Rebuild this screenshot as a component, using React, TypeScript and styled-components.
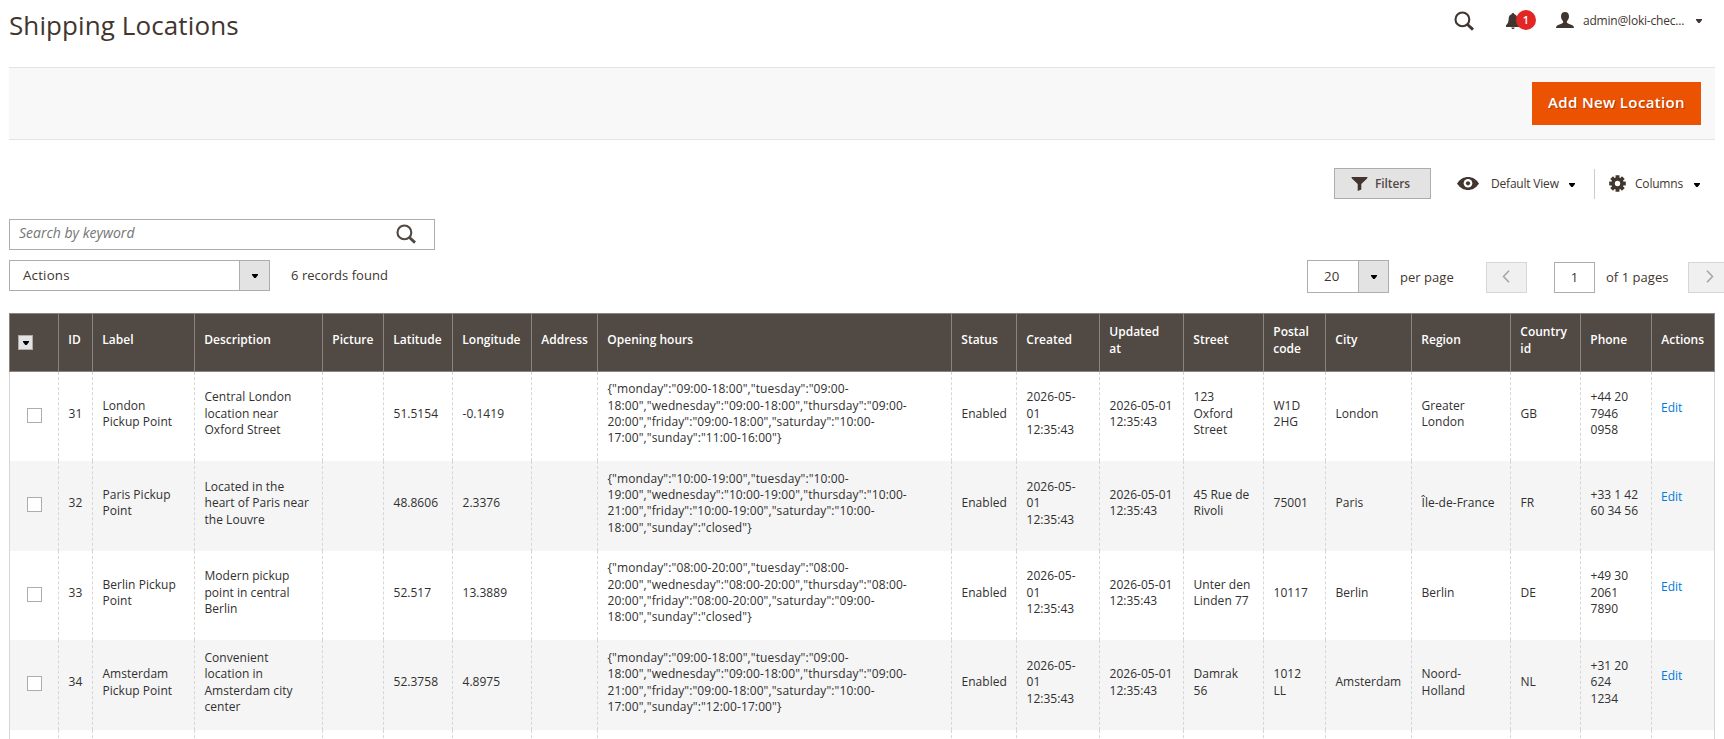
import React from 'react';
import styled, { createGlobalStyle } from 'styled-components';

const GlobalStyle = createGlobalStyle`
  *, *::before, *::after { box-sizing: border-box; }
  html, body { margin: 0; height: 100%; overflow: hidden; }
  body {
    background: #fff;
    color: #41362f;
    font-family: 'Open Sans', 'Liberation Sans', sans-serif;
    font-size: 13px;
    line-height: 1.36;
  }
`;

const Page = styled.div`
  width: 1706px;
  margin-left: 9px;
`;

const Header = styled.header`
  display: flex;
  justify-content: space-between;
  height: 67px;
`;

const Title = styled.h1`
  margin: 7px 0 0;
  font-size: 26px;
  font-weight: 400;
  letter-spacing: 0.1px;
  line-height: 37px;
  white-space: nowrap;
`;

const HeaderTools = styled.div`
  display: flex;
  align-items: flex-start;
  svg { display: block; }
`;

const HeaderSearch = styled.div`
  padding-top: 11px;
  margin-right: 31px;
`;

const Notifications = styled.div`
  position: relative;
  width: 50px;
  padding-top: 13px;
`;

const Badge = styled.span`
  position: absolute;
  left: 10px;
  top: 10px;
  width: 20px;
  height: 20px;
  border-radius: 50%;
  background: #e22626;
  color: #fff;
  font-size: 11px;
  font-weight: 600;
  line-height: 20px;
  text-align: center;
`;

const UserMenu = styled.div`
  display: flex;
  align-items: center;
  height: 40px;
  width: 159px;
  font-size: 12px;
  letter-spacing: -0.2px;
  svg:last-child { margin-top: 2px; }
`;

const UserName = styled.span`
  width: 113px;
  margin-left: 9px;
  padding-top: 2px;
`;

const ActionBar = styled.div`
  display: flex;
  justify-content: flex-end;
  height: 73px;
  padding: 14px 14px 0 0;
  background: #f8f8f8;
  border-top: 1px solid #e3e3e3;
  border-bottom: 1px solid #e3e3e3;
`;

const PrimaryButton = styled.button`
  width: 169px;
  height: 43px;
  padding: 0 0 2px;
  border: 0;
  background: #eb5202;
  color: #fff;
  font: 600 15px/41px 'Open Sans', sans-serif;
  letter-spacing: 0.35px;
  text-shadow: 1px 1px 0 rgba(0, 0, 0, 0.25);
`;

const ViewTools = styled.div`
  display: flex;
  align-items: center;
  justify-content: flex-end;
  height: 31px;
  margin-top: 28px;
  font-size: 12px;
  letter-spacing: -0.2px;
`;

const FilterButton = styled.button`
  display: flex;
  align-items: center;
  gap: 7px;
  width: 97px;
  height: 31px;
  padding: 0 0 0 16px;
  border: 1px solid #adadad;
  background: #e3e3e3;
  color: #514943;
  font: 600 12px/29px 'Open Sans', sans-serif;
  letter-spacing: -0.1px;
`;

const ViewToggle = styled.div<{ $width: number; $gap: number; $divided?: boolean }>`
  display: flex;
  align-items: center;
  width: ${(p) => p.$width}px;
  height: 30px;
  padding-left: ${(p) => (p.$divided ? 14 : 26)}px;
  border-left: ${(p) => (p.$divided ? '1px solid #ccc' : '0')};
  gap: ${(p) => p.$gap}px;
  white-space: nowrap;
  svg:last-child {
    margin-top: 3px;
    margin-left: ${(p) => (p.$divided ? 2 : -2)}px;
  }
`;

const ViewLabel = styled.span`
  padding-top: 2px;
`;

const SearchBox = styled.div`
  display: flex;
  justify-content: space-between;
  width: 426px;
  height: 31px;
  margin-top: 20px;
  padding: 0 17px 0 9px;
  border: 1px solid #adadad;
  svg { margin-top: 4px; }
`;

const Placeholder = styled.span`
  color: #757575;
  font-size: 14px;
  font-style: italic;
  line-height: 26px;
`;

const GridControls = styled.div`
  display: flex;
  justify-content: space-between;
  height: 33px;
  margin-top: 10px;
`;

const ControlGroup = styled.div`
  display: flex;
  align-items: flex-start;
`;

const Pager = styled(ControlGroup)`
  width: 408px;
  flex: none;
`;

const Select = styled.div<{ $width: number; $height: number; $indent: number }>`
  display: flex;
  justify-content: space-between;
  flex: none;
  width: ${(p) => p.$width}px;
  height: ${(p) => p.$height}px;
  padding-left: ${(p) => p.$indent}px;
  border: 1px solid #adadad;
  font-size: 13.3px;
  letter-spacing: 0.2px;
  line-height: ${(p) => p.$height - 2}px;
`;

const SelectArrow = styled.span`
  display: flex;
  align-items: center;
  justify-content: center;
  width: 30px;
  border-left: 1px solid #adadad;
  background: #e3e3e3;
`;

const Caption = styled.span<{ $width?: number; $indent: number; $top: number }>`
  flex: none;
  width: ${(p) => (p.$width ? `${p.$width}px` : 'auto')};
  padding-left: ${(p) => p.$indent}px;
  margin-top: ${(p) => p.$top}px;
  line-height: 18px;
  letter-spacing: 0.04px;
  white-space: nowrap;
`;

const PageButton = styled.button<{ $shift: number }>`
  display: flex;
  align-items: center;
  justify-content: center;
  flex: none;
  width: 41px;
  height: 31px;
  margin-top: 2px;
  padding: 0 ${(p) => (p.$shift < 0 ? 2 : 0)}px 2px ${(p) => (p.$shift > 0 ? 2 : 0)}px;
  border: 1px solid #d6d6d6;
  background: #f0f0f0;
`;

const PageNumber = styled.div`
  flex: none;
  width: 41px;
  height: 31px;
  margin: 2px 0 0 27px;
  border: 1px solid #adadad;
  line-height: 29px;
  text-align: center;
`;

const Grid = styled.table`
  width: 1706px;
  margin-top: 20px;
  border-collapse: collapse;
  table-layout: fixed;
  font-size: 12px;
  line-height: 16.4px;
`;

const HeadCell = styled.th`
  height: 58px;
  padding: 7px 8px 11px 9.3px;
  border: 1px solid #8a837f;
  background: #514943;
  color: #fff;
  font-weight: 600;
  text-align: left;
  vertical-align: middle;
  white-space: pre-line;
`;

const Row = styled.tr`
  height: 89.64px;
  &:nth-child(even) { background: #f5f5f5; }
`;

const Cell = styled.td<{ $spacing?: number }>`
  padding: 9px 8px 14px 9.5px;
  letter-spacing: ${(p) => p.$spacing ?? 0}px;
  border-left: 1px dashed #d6d6d6;
  border-right: 1px dashed #d6d6d6;
  color: #303030;
  vertical-align: middle;
  white-space: pre-line;
  &:first-child { border-left-style: solid; }
  &:last-child { border-right-style: solid; }
`;

const CheckCell = styled(Cell)`
  padding-top: 8px;
  padding-bottom: 14.5px;
`;

const ActionCell = styled(Cell)`
  padding: 8.5px 8px 26px 9px;
`;

const EditLink = styled.a`
  color: #007bdb;
`;

const Checkbox = styled.span`
  display: block;
  width: 15px;
  height: 15px;
  margin: 4px 0 0 7.5px;
  border: 1px solid #adadad;
  background: #fff;
`;

const MassSelect = styled.span`
  display: flex;
  align-items: center;
  justify-content: center;
  width: 15px;
  height: 15px;
  margin: 4px 0 0 -1.3px;
  padding-left: 1px;
  border: 1px solid #adadad;
  background: #e3e3e3;
`;

const Caret = ({ color = '#000' }: { color?: string }) => (
  <svg width="6" height="4" viewBox="0 0 6 4"><path d="M0 0h6v1L3.7 4H2.3L0 1z" fill={color} /></svg>
);

const SearchIcon = ({ color }: { color: string }) => (
  <svg width="21" height="21" viewBox="0 0 21 21" fill="none" stroke={color}>
    <circle cx="8.4" cy="8.4" r="6.9" strokeWidth="2.1" />
    <path d="M13.2 13.2l5.8 5.4" strokeWidth="2.9" />
  </svg>
);

const BellIcon = () => (
  <svg width="14" height="17" viewBox="0 0 14 17" fill="#41362f">
    <path d="M7 0C6.2 0 5.7.6 5.6 1.3 3.8 1.8 2.8 3.4 2.7 5.4 2.6 9 1.8 10.6 0 12.3V14h14v-1.7c-1.8-1.7-2.6-3.3-2.7-6.9-.1-2-1.1-3.6-2.9-4.1C8.3.6 7.8 0 7 0zM5.4 14.6h3.2C8.5 15.6 7.8 16.2 7 16.2s-1.5-.6-1.6-1.6z" />
  </svg>
);

const UserIcon = () => (
  <svg width="18" height="16" viewBox="0 0 18 16" fill="#41362f">
    <path d="M9 0c2.500 0 4 1.500 4 4.300 0 2-.8 3.800-2.100 4.800v1.400c.3.700 1.700 1.200 3.600 1.900 2.200.8 3.500 1.600 3.500 3.600H0c0-2 1.300-2.800 3.500-3.600 1.900-.7 3.300-1.200 3.600-1.900V9.100C5.800 8.100 5 6.300 5 4.300 5 1.500 6.500 0 9 0z" />
  </svg>
);

const FunnelIcon = () => (
  <svg width="17" height="14" viewBox="0 0 17 14" fill="#41362f">
    <path d="M.5 0h16c0 1-.5 1.700-1.200 2.300L10.300 7v5.400L6.700 14V7L1.700 2.300C1 1.700.5 1 .5 0z" />
  </svg>
);

const EyeIcon = () => (
  <svg width="22" height="13" viewBox="0 0 22 13">
    <path d="M0 6.500C3 2 6.800 0 11 0s8 2 11 6.500C19 11 15.200 13 11 13S3 11 0 6.500z" fill="#41362f" />
    <circle cx="11" cy="6.300" r="4.300" fill="#fff" />
    <circle cx="11" cy="6.300" r="2.100" fill="#41362f" />
  </svg>
);

const GearIcon = () => (
  <svg width="17" height="17" viewBox="-8.500 -8.500 17 17" fill="#41362f">
    {[0, 45, 90, 135].map((angle) => (
      <path key={angle} d="M-2-8.300h4L1.600 0 2 8.300h-4L-1.600 0z" transform={`rotate(${angle})`} />
    ))}
    <circle r="6.200" />
    <circle r="2.700" fill="#fff" />
  </svg>
);

const Chevron = ({ next }: { next?: boolean }) => (
  <svg width="8" height="13" viewBox="0 0 8 13" fill="none" stroke="#a5a3a1" strokeWidth="1.500">
    <path d={next ? 'M1 .8l5.500 5.700L1 12.200' : 'M7 .8L1.500 6.500 7 12.200'} />
  </svg>
);

const columns: [string, number][] = [
  ['', 49], ['ID', 34], ['Label', 102], ['Description', 128], ['Picture', 61],
  ['Latitude', 69], ['Longitude', 79], ['Address', 66], ['Opening hours', 354],
  ['Status', 65], ['Created', 83], ['Updated\nat', 84], ['Street', 80],
  ['Postal code', 62], ['City', 86], ['Region', 99], ['Country id', 70],
  ['Phone', 71], ['Actions', 63],
];

const HOURS_COLUMN = 7;

const hours = (week: string, friday: string, thursday: string, saturday: string, sunday: string) =>
  `{"monday":"${week}","tuesday":"${week}","wednesday":"${week}","thursday":"${thursday}","friday":"${friday}","saturday":"${saturday}","sunday":"${sunday}"}`;

const created = '2026-05-\n01\n12:35:43';
const updated = '2026-05-01\n12:35:43';

const rows: string[][] = [
  ['31', 'London\nPickup Point', 'Central London location near Oxford Street', '', '51.5154', '-0.1419', '',
    hours('09:00-18:00', '09:00-18:00', '09:00-20:00', '10:00-17:00', '11:00-16:00'),
    'Enabled', created, updated, '123\nOxford\nStreet', 'W1D 2HG', 'London', 'Greater London', 'GB', '+44 20\n7946\n0958'],
  ['32', 'Paris Pickup Point', 'Located in the heart of Paris near the Louvre', '', '48.8606', '2.3376', '',
    hours('10:00-19:00', '10:00-19:00', '10:00-21:00', '10:00-18:00', 'closed'),
    'Enabled', created, updated, '45 Rue de Rivoli', '75001', 'Paris', 'Île-de-France', 'FR', '+33 1 42\n60 34 56'],
  ['33', 'Berlin Pickup Point', 'Modern pickup point in central Berlin', '', '52.517', '13.3889', '',
    hours('08:00-20:00', '08:00-20:00', '08:00-20:00', '09:00-18:00', 'closed'),
    'Enabled', created, updated, 'Unter den Linden 77', '10117', 'Berlin', 'Berlin', 'DE', '+49 30\n2061\n7890'],
  ['34', 'Amsterdam Pickup Point', 'Convenient location in Amsterdam city center', '', '52.3758', '4.8975', '',
    hours('09:00-18:00', '09:00-18:00', '09:00-21:00', '10:00-17:00', '12:00-17:00'),
    'Enabled', created, updated, 'Damrak\n56', '1012\nLL', 'Amsterdam', 'Noord-\nHolland', 'NL', '+31 20\n624\n1234'],
];

export default function App() {
  return (
    <>
      <GlobalStyle />
      <Page>
        <Header>
          <Title>Shipping Locations</Title>
          <HeaderTools>
            <HeaderSearch><SearchIcon color="#41362f" /></HeaderSearch>
            <Notifications><BellIcon /><Badge>1</Badge></Notifications>
            <UserMenu>
              <UserIcon />
              <UserName>admin@loki-chec...</UserName>
              <Caret color="#41362f" />
            </UserMenu>
          </HeaderTools>
        </Header>
        <ActionBar><PrimaryButton>Add New Location</PrimaryButton></ActionBar>
        <ViewTools>
          <FilterButton><FunnelIcon />Filters</FilterButton>
          <ViewToggle $width={163} $gap={12}><EyeIcon /><ViewLabel>Default View</ViewLabel><Caret /></ViewToggle>
          <ViewToggle $width={121} $gap={9} $divided><GearIcon /><ViewLabel>Columns</ViewLabel><Caret /></ViewToggle>
        </ViewTools>
        <SearchBox>
          <Placeholder>Search by keyword</Placeholder>
          <SearchIcon color="#514943" />
        </SearchBox>
        <GridControls>
          <ControlGroup>
            <Select $width={261} $height={31} $indent={13}>Actions<SelectArrow><Caret /></SelectArrow></Select>
            <Caption $indent={21} $top={6}>6 records found</Caption>
          </ControlGroup>
          <Pager>
            <Select $width={82} $height={33} $indent={16}>20<SelectArrow><Caret /></SelectArrow></Select>
            <Caption $width={97} $indent={11} $top={8}>per page</Caption>
            <PageButton $shift={-1}><Chevron /></PageButton>
            <PageNumber>1</PageNumber>
            <Caption $width={93} $indent={11} $top={8}>of 1 pages</Caption>
            <PageButton $shift={1}><Chevron next /></PageButton>
          </Pager>
        </GridControls>
        <Grid>
          <colgroup>
            {columns.map(([name, width]) => <col key={name} width={width} />)}
          </colgroup>
          <thead>
            <tr>
              {columns.map(([name]) => (
                <HeadCell key={name}>{name || <MassSelect><Caret /></MassSelect>}</HeadCell>
              ))}
            </tr>
          </thead>
          <tbody>
            {rows.map((row) => (
              <Row key={row[0]}>
                <CheckCell><Checkbox /></CheckCell>
                {row.map((value, i) => (
                  <Cell key={i} $spacing={i === HOURS_COLUMN ? 0.11 : 0.03}>{value}</Cell>
                ))}
                <ActionCell><EditLink>Edit</EditLink></ActionCell>
              </Row>
            ))}
            <Row>{columns.map(([name]) => <Cell key={name} />)}</Row>
          </tbody>
        </Grid>
      </Page>
    </>
  );
}
